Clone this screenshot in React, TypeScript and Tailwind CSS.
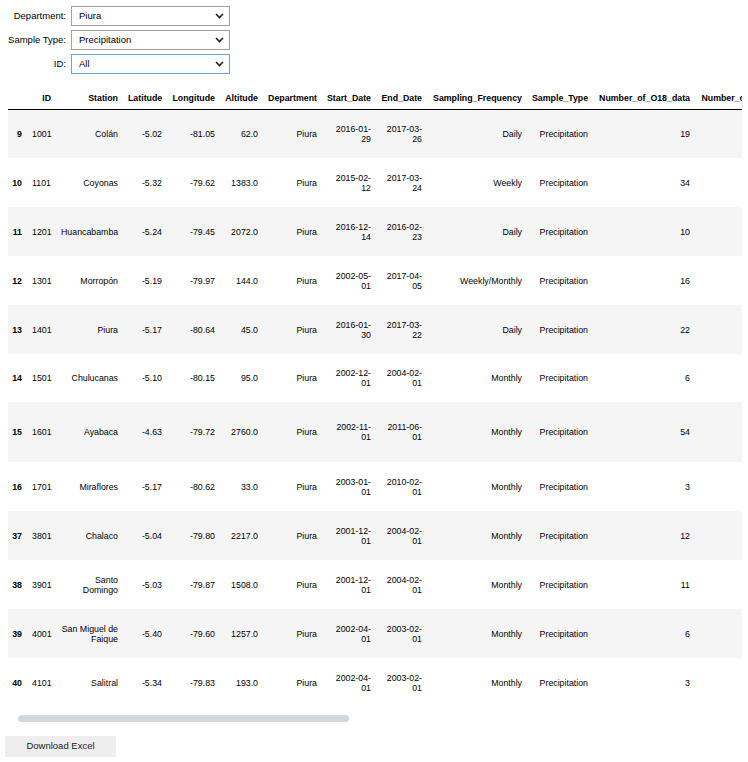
import React from "react";

const filters = [
  { label: "Department:", value: "Piura", focused: false },
  { label: "Sample Type:", value: "Precipitation", focused: false },
  { label: "ID:", value: "All", focused: true },
];

const columns = [
  { key: "idx", title: "", width: "w-[19px]" },
  { key: "id", title: "ID", width: "w-[29px]" },
  { key: "station", title: "Station", width: "w-[67px]" },
  { key: "lat", title: "Latitude", width: "w-[44px]" },
  { key: "lon", title: "Longitude", width: "w-[53px]" },
  { key: "alt", title: "Altitude", width: "w-[43px]" },
  { key: "dept", title: "Department", width: "w-[59px]" },
  { key: "start", title: "Start_Date", width: "w-[54px]" },
  { key: "end", title: "End_Date", width: "w-[51px]" },
  { key: "freq", title: "Sampling_Frequency", width: "w-[100px]" },
  { key: "type", title: "Sample_Type", width: "w-[66px]" },
  { key: "o18", title: "Number_of_O18_data", width: "w-[102px]" },
  { key: "h2", title: "Number_of_H2_data", width: "w-[97px]" },
];

type Row = {
  idx: number;
  id: string;
  station: string[];
  lat: string;
  lon: string;
  alt: string;
  start: string;
  end: string;
  freq: string;
  o18: number;
  h: string;
};

const rows: Row[] = [
  { idx: 9, id: "1001", station: ["Colán"], lat: "-5.02", lon: "-81.05", alt: "62.0", start: "2016-01-29", end: "2017-03-26", freq: "Daily", o18: 19, h: "h-[49px]" },
  { idx: 10, id: "1101", station: ["Coyonas"], lat: "-5.32", lon: "-79.62", alt: "1383.0", start: "2015-02-12", end: "2017-03-24", freq: "Weekly", o18: 34, h: "h-[49px]" },
  { idx: 11, id: "1201", station: ["Huancabamba"], lat: "-5.24", lon: "-79.45", alt: "2072.0", start: "2016-12-14", end: "2016-02-23", freq: "Daily", o18: 10, h: "h-[49px]" },
  { idx: 12, id: "1301", station: ["Morropón"], lat: "-5.19", lon: "-79.97", alt: "144.0", start: "2002-05-01", end: "2017-04-05", freq: "Weekly/Monthly", o18: 16, h: "h-[49px]" },
  { idx: 13, id: "1401", station: ["Piura"], lat: "-5.17", lon: "-80.64", alt: "45.0", start: "2016-01-30", end: "2017-03-22", freq: "Daily", o18: 22, h: "h-[49px]" },
  { idx: 14, id: "1501", station: ["Chulucanas"], lat: "-5.10", lon: "-80.15", alt: "95.0", start: "2002-12-01", end: "2004-02-01", freq: "Monthly", o18: 6, h: "h-[48px]" },
  { idx: 15, id: "1601", station: ["Ayabaca"], lat: "-4.63", lon: "-79.72", alt: "2760.0", start: "2002-11-01", end: "2011-06-01", freq: "Monthly", o18: 54, h: "h-[60px]" },
  { idx: 16, id: "1701", station: ["Miraflores"], lat: "-5.17", lon: "-80.62", alt: "33.0", start: "2003-01-01", end: "2010-02-01", freq: "Monthly", o18: 3, h: "h-[49px]" },
  { idx: 37, id: "3801", station: ["Chalaco"], lat: "-5.04", lon: "-79.80", alt: "2217.0", start: "2001-12-01", end: "2004-02-01", freq: "Monthly", o18: 12, h: "h-[49px]" },
  { idx: 38, id: "3901", station: ["Santo", "Domingo"], lat: "-5.03", lon: "-79.87", alt: "1508.0", start: "2001-12-01", end: "2004-02-01", freq: "Monthly", o18: 11, h: "h-[49px]" },
  { idx: 39, id: "4001", station: ["San Miguel de", "Faique"], lat: "-5.40", lon: "-79.60", alt: "1257.0", start: "2002-04-01", end: "2003-02-01", freq: "Monthly", o18: 6, h: "h-[49px]" },
  { idx: 40, id: "4101", station: ["Salitral"], lat: "-5.34", lon: "-79.83", alt: "193.0", start: "2002-04-01", end: "2003-02-01", freq: "Monthly", o18: 3, h: "h-[49px]" },
];

function Chevron() {
  return (
    <svg width="9" height="6" viewBox="0 0 9 6" className="shrink-0">
      <path d="M1 1 L4.5 4.5 L8 1" fill="none" stroke="#222" strokeWidth="1.7" />
    </svg>
  );
}

function Lines({ parts }: { parts: string[] }) {
  return (
    <>
      {parts.map((p, i) => (
        <React.Fragment key={i}>
          {i > 0 && <br />}
          {p}
        </React.Fragment>
      ))}
    </>
  );
}

const splitDate = (d: string) => [d.slice(0, 8), d.slice(8)];

export default function App() {
  return (
    <div className="w-[748px] h-[762px] overflow-hidden bg-white text-black font-['Liberation_Sans',Arial,sans-serif]">
      {/* filter widgets */}
      <div className="pt-[6px] flex flex-col gap-[4px]">
        {filters.map((f) => (
          <div key={f.label} className="flex items-center text-[9.5px]">
            <div className="w-[66px] text-right whitespace-nowrap">{f.label}</div>
            <div
              className={`ml-[5px] w-[159px] h-[20px] flex items-center justify-between pl-[7px] pr-[5px] border bg-white ${
                f.focused ? "border-[#64a0dc]" : "border-[#a0a0a0]"
              }`}
            >
              <span>{f.value}</span>
              <Chevron />
            </div>
          </div>
        ))}
      </div>

      {/* data table, scrolled horizontally: the last column is cut by the frame */}
      <div className="mt-[14px] ml-[8px] w-[734px] overflow-hidden">
        <table className="table-fixed border-collapse w-[784px] text-[8.8px] leading-[10px]">
          <colgroup>
            {columns.map((c) => (
              <col key={c.key} className={c.width} />
            ))}
          </colgroup>
          <thead>
            <tr className="h-[21px] border-b border-black">
              {columns.map((c) => (
                <th key={c.key} className="px-[5px] text-right font-bold whitespace-nowrap align-middle">
                  {c.title}
                </th>
              ))}
            </tr>
          </thead>
          <tbody>
            {rows.map((r, i) => (
              <tr key={r.idx} className={`${r.h} ${i % 2 === 0 ? "bg-[#f5f5f5]" : "bg-white"}`}>
                <th className="pr-[5px] text-right font-bold align-middle">{r.idx}</th>
                <td className="px-[5px] text-right align-middle">{r.id}</td>
                <td className="px-[5px] text-right align-middle">
                  <Lines parts={r.station} />
                </td>
                <td className="px-[5px] text-right align-middle">{r.lat}</td>
                <td className="px-[5px] text-right align-middle">{r.lon}</td>
                <td className="px-[5px] text-right align-middle">{r.alt}</td>
                <td className="px-[5px] text-right align-middle">Piura</td>
                <td className="px-[5px] text-right align-middle">
                  <Lines parts={splitDate(r.start)} />
                </td>
                <td className="px-[5px] text-right align-middle">
                  <Lines parts={splitDate(r.end)} />
                </td>
                <td className="px-[5px] text-right align-middle">{r.freq}</td>
                <td className="px-[5px] text-right align-middle">Precipitation</td>
                <td className="px-[5px] text-right align-middle">{r.o18}</td>
                <td className="px-[5px]" />
              </tr>
            ))}
          </tbody>
        </table>
      </div>

      {/* horizontal scroll thumb */}
      <div className="mt-[8px] ml-[18px] w-[331px] h-[7px] rounded-full bg-[#d3d8de]" />

      <button className="mt-[14px] ml-[5px] w-[111px] h-[21px] bg-[#eeeeee] text-[9.5px] text-[#222]">
        Download Excel
      </button>
    </div>
  );
}
